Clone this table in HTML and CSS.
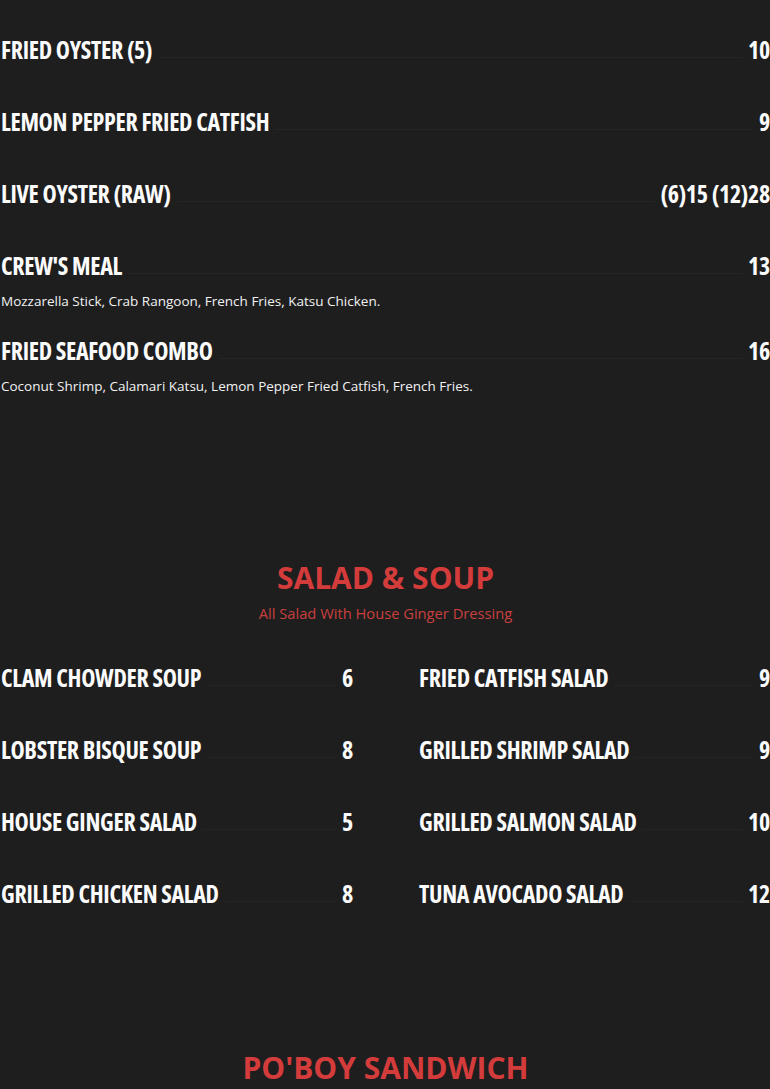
FILE: index.html
```html
<!DOCTYPE html>
<html>
<head>
<meta charset="utf-8">
<link rel="stylesheet" href="styles.css">
</head>
<body>
<div class="page">
  <section class="list">
    <div class="item"><div class="head"><span class="name">FRIED OYSTER (5)</span><span class="dots"></span><span class="price">10</span></div></div>
    <div class="item"><div class="head"><span class="name">LEMON PEPPER FRIED CATFISH</span><span class="dots"></span><span class="price">9</span></div></div>
    <div class="item"><div class="head"><span class="name">LIVE OYSTER (RAW)</span><span class="dots"></span><span class="price">(6)15 (12)28</span></div></div>
    <div class="item"><div class="head"><span class="name">CREW'S MEAL</span><span class="dots"></span><span class="price">13</span></div><p class="desc">Mozzarella Stick, Crab Rangoon, French Fries, Katsu Chicken.</p></div>
    <div class="item"><div class="head"><span class="name">FRIED SEAFOOD COMBO</span><span class="dots"></span><span class="price">16</span></div><p class="desc">Coconut Shrimp, Calamari Katsu, Lemon Pepper Fried Catfish, French Fries.</p></div>
  </section>

  <section class="section">
    <h2 class="title">SALAD &amp; SOUP</h2>
    <p class="subtitle">All Salad With House Ginger Dressing</p>
    <div class="grid">
      <div class="col">
        <div class="item"><div class="head"><span class="name">CLAM CHOWDER SOUP</span><span class="dots"></span><span class="price">6</span></div></div>
        <div class="item"><div class="head"><span class="name">LOBSTER BISQUE SOUP</span><span class="dots"></span><span class="price">8</span></div></div>
        <div class="item"><div class="head"><span class="name">HOUSE GINGER SALAD</span><span class="dots"></span><span class="price">5</span></div></div>
        <div class="item"><div class="head"><span class="name">GRILLED CHICKEN SALAD</span><span class="dots"></span><span class="price">8</span></div></div>
      </div>
      <div class="col">
        <div class="item"><div class="head"><span class="name">FRIED CATFISH SALAD</span><span class="dots"></span><span class="price">9</span></div></div>
        <div class="item"><div class="head"><span class="name">GRILLED SHRIMP SALAD</span><span class="dots"></span><span class="price">9</span></div></div>
        <div class="item"><div class="head"><span class="name">GRILLED SALMON SALAD</span><span class="dots"></span><span class="price">10</span></div></div>
        <div class="item"><div class="head"><span class="name">TUNA AVOCADO SALAD</span><span class="dots"></span><span class="price">12</span></div></div>
      </div>
    </div>
  </section>

  <section class="section last">
    <h2 class="title">PO'BOY SANDWICH</h2>
  </section>
</div>
</body>
</html>
```

FILE: styles.css
```css
html, body {
  margin: 0;
  padding: 0;
  background: #1e1e1f;
}
body {
  color: #ffffff;
  font-family: "Open Sans", sans-serif;
  overflow: hidden;
}
.page {
  width: 770px;
  padding: 32px 0 0 1px;
  box-sizing: border-box;
}
.item {
  display: flow-root;
  min-height: 72px;
}
.head {
  display: flex;
  align-items: center;
  height: 36px;
}
.name, .price {
  font-family: "Open Sans", sans-serif;
  font-stretch: 75%;
  font-weight: 700;
  font-size: 24px;
  letter-spacing: -0.3px;
  line-height: 36px;
  white-space: nowrap;
  color: #fbfbfb;
}
.dots {
  flex: 1;
  align-self: flex-end;
  margin: 0 6px 10px;
  border-bottom: 1px solid rgba(255, 255, 255, 0.035);
}
.desc {
  margin: 7px 0 22px;
  font-family: "Open Sans", sans-serif;
  font-size: 13.5px;
  line-height: 20px;
  color: #f2f2f2;
}
.section {
  padding-top: 140px;
}
.title {
  margin: 0;
  text-align: center;
  font-family: "Open Sans", sans-serif;
  font-weight: 700;
  font-size: 30px;
  line-height: 40px;
  color: #d43c3c;
}
.subtitle {
  margin: 5px 0 0;
  text-align: center;
  font-family: "Open Sans", sans-serif;
  font-size: 14.7px;
  line-height: 20px;
  color: #c9403d;
}
.grid {
  display: grid;
  grid-template-columns: 352px 351px;
  column-gap: 66px;
  margin-top: 37px;
}
.section.last {
  padding-top: 100px;
}
```
